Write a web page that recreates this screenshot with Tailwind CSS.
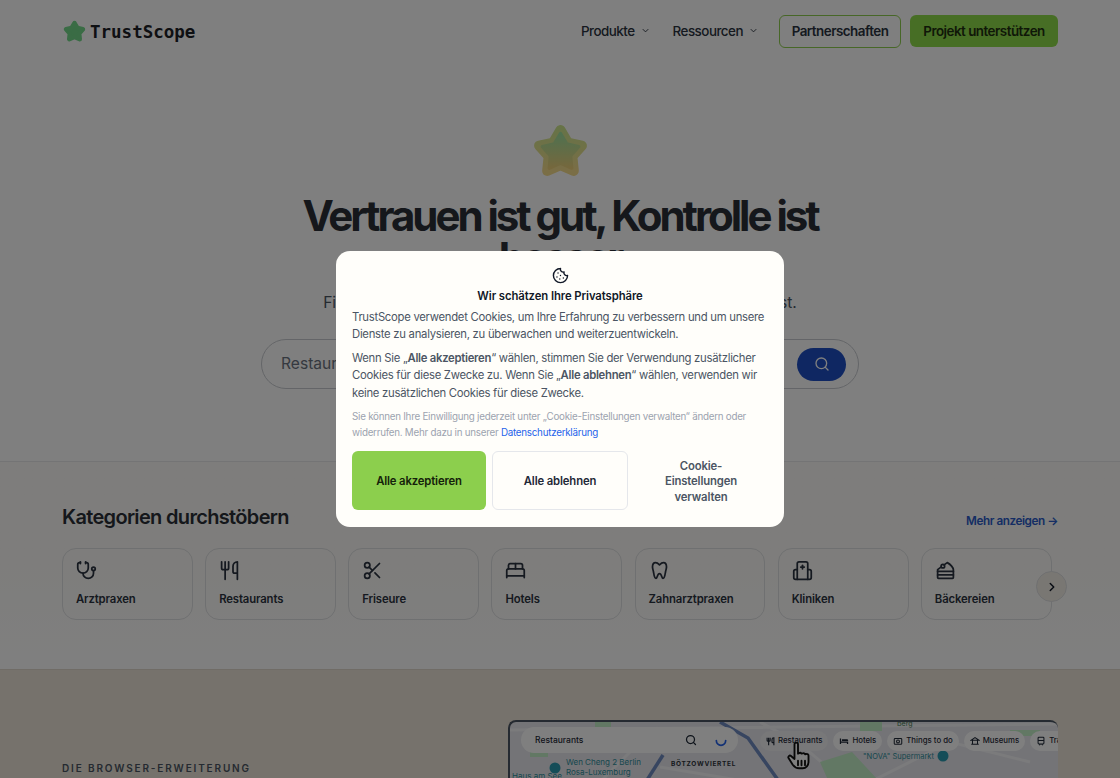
<!doctype html>
<html lang="de"><head><meta charset="utf-8"><script src="https://cdn.jsdelivr.net/npm/@tailwindcss/browser@4"></script><title>TrustScope</title></head>
<body class="font-['Inter','Noto_Sans',sans-serif] bg-white text-[#111827]">
<div class="relative h-[778px] w-[1120px] overflow-hidden">
  <header class="flex h-[62px] items-center justify-between px-[62px]">
    <div class="flex items-center gap-[3px]">
      <svg class="w-[25px] h-[25px]" viewBox="0 0 56 56"><path d="M28 9l6.500 11.100 12.500 2.700-8.500 9.600 1.300 12.800-11.800-5.200-11.800 5.200 1.300-12.800-8.500-9.600 12.500-2.700z" fill="#74d98a" stroke="#74d98a" stroke-width="10" stroke-linejoin="round"/></svg>
      <span class="mt-[2px] font-['DejaVu_Sans_Mono',monospace] text-[17.5px] font-bold text-[#1c2026]">TrustScope</span>
    </div>
    <nav class="flex items-center text-[13.4px] font-medium tracking-[-0.038em] text-[#2b3340]">
      <span class="flex items-center gap-[5px]">Produkte <svg class="w-[11px] h-[11px]" viewBox="0 0 24 24" fill="none" stroke="currentColor" stroke-width="2"><path d="m6 9 6 6 6-6"/></svg></span>
      <span class="ml-[22px] flex items-center gap-[5px]">Ressourcen <svg class="w-[11px] h-[11px]" viewBox="0 0 24 24" fill="none" stroke="currentColor" stroke-width="2"><path d="m6 9 6 6 6-6"/></svg></span>
      <a class="ml-[20px] flex h-[33px] w-[122px] items-center justify-center rounded-[6px] border border-[#8fce4e] font-semibold">Partnerschaften</a>
      <a class="ml-[9px] flex h-[32px] w-[148px] items-center justify-center rounded-[6px] bg-[#8fdc4a] font-semibold text-[#1f3010]">Projekt unterstützen</a>
    </nav>
  </header>

  <section class="h-[400px] border-b border-[#e8e9ea] pt-[58px] text-center">
    <svg class="mx-auto w-[63px] h-[63px]" viewBox="0 0 56 56">
      <defs>
        <linearGradient id="a" x1="0" y1="0" x2="0" y2="1"><stop offset="0" stop-color="#cfe68f"/><stop offset="1" stop-color="#f5dc8c"/></linearGradient>
        <linearGradient id="b" x1="0" y1="0" x2="0" y2="1"><stop offset="0" stop-color="#9fe2a0"/><stop offset="1" stop-color="#ecd07a"/></linearGradient>
      </defs>
      <path d="M28 9l6.500 11.100 12.500 2.700-8.500 9.600 1.300 12.800-11.800-5.200-11.800 5.200 1.300-12.800-8.500-9.600 12.500-2.700z" fill="url(#a)" stroke="url(#a)" stroke-width="9" stroke-linejoin="round"/>
      <path d="M28 12l5.600 9.300 10.600 2.400-7.200 8.200 1 10.900-10-4.300-10 4.300 1-10.900-7.200-8.200 10.600-2.400z" fill="url(#b)" stroke="url(#b)" stroke-width="3" stroke-linejoin="round"/>
    </svg>
    <h1 class="mx-auto mt-[12px] w-[600px] text-[42px] font-bold leading-[42px] tracking-[-0.072em] text-[#2a2f36]">Vertrauen ist gut, Kontrolle ist besser</h1>
    <p class="mt-[12px] whitespace-nowrap text-[15.6px] leading-[24px] text-[#4b5563]">Finden Sie heraus, was an Online-Bewertungen wirklich echt ist.</p>
    <div class="mx-auto mt-[24px] flex h-[50px] w-[598px] items-center justify-between rounded-full border border-[#c8cbd0] pl-[19px] pr-[12px]">
      <span class="text-[15.6px] text-[#6b7280]">Restaurants, Hotels, Ärzte und mehr</span>
      <span class="flex h-[33px] w-[49px] items-center justify-center rounded-full bg-[#1e4fc4]"><svg class="w-[16px] h-[16px]" viewBox="0 0 24 24" fill="none" stroke="#fff" stroke-width="2" stroke-linecap="round"><circle cx="11" cy="11" r="8"/><path d="m21 21-4.300-4.300"/></svg></span>
    </div>
  </section>

  <section class="relative h-[207px] bg-linear-to-b from-[#fcfbf8] via-[#fcfbf8] to-white px-[62px] pt-[41px]">
    <div class="flex items-end justify-between">
      <h2 class="text-[20px] font-semibold leading-[28px] tracking-[-0.67px] text-[#2a2f36]">Kategorien durchstöbern</h2>
      <a class="pb-[1px] text-[11.75px] font-semibold leading-[18px] tracking-[-0.038em] text-[#2a5bc8]">Mehr anzeigen →</a>
    </div>
    <div class="mt-[17px] flex gap-[12.25px] text-[11.3px] font-semibold tracking-[-0.12px] text-[#2b3340]">
      <div class="h-[72px] w-[130.9px] rounded-[14px] border border-[#dfe0e2] px-[13px] pt-[11px]"><svg class="w-[21px] h-[21px]" viewBox="0 0 24 24" fill="none" stroke="currentColor" stroke-width="2" stroke-linecap="round" stroke-linejoin="round"><path d="M11 2v2"/><path d="M5 2v2"/><path d="M5 3H4a2 2 0 0 0-2 2v4a6 6 0 0 0 12 0V5a2 2 0 0 0-2-2h-1"/><path d="M8 15a6 6 0 0 0 12 0v-3"/><circle cx="20" cy="10" r="2"/></svg><p class="mt-[10px]">Arztpraxen</p></div>
      <div class="h-[72px] w-[130.9px] rounded-[14px] border border-[#dfe0e2] px-[13px] pt-[11px]"><svg class="w-[21px] h-[21px]" viewBox="0 0 24 24" fill="none" stroke="currentColor" stroke-width="2" stroke-linecap="round" stroke-linejoin="round"><path d="M3 2v7c0 1.100.9 2 2 2h4a2 2 0 0 0 2-2V2"/><path d="M7 2v20"/><path d="M21 15V2a5 5 0 0 0-5 5v6c0 1.100.9 2 2 2h3Zm0 0v7"/></svg><p class="mt-[10px]">Restaurants</p></div>
      <div class="h-[72px] w-[130.9px] rounded-[14px] border border-[#dfe0e2] px-[13px] pt-[11px]"><svg class="w-[21px] h-[21px]" viewBox="0 0 24 24" fill="none" stroke="currentColor" stroke-width="2" stroke-linecap="round" stroke-linejoin="round"><circle cx="6" cy="6" r="3"/><path d="M8.120 8.120 12 12"/><path d="M20 4 8.120 15.880"/><circle cx="6" cy="18" r="3"/><path d="M14.800 14.800 20 20"/></svg><p class="mt-[10px]">Friseure</p></div>
      <div class="h-[72px] w-[130.9px] rounded-[14px] border border-[#dfe0e2] px-[13px] pt-[11px]"><svg class="w-[21px] h-[21px]" viewBox="0 0 24 24" fill="none" stroke="currentColor" stroke-width="2" stroke-linecap="round" stroke-linejoin="round"><path d="M2 20v-8a2 2 0 0 1 2-2h16a2 2 0 0 1 2 2v8"/><path d="M4 10V6a2 2 0 0 1 2-2h12a2 2 0 0 1 2 2v4"/><path d="M12 4v6"/><path d="M2 18h20"/></svg><p class="mt-[10px]">Hotels</p></div>
      <div class="h-[72px] w-[130.9px] rounded-[14px] border border-[#dfe0e2] px-[13px] pt-[11px]"><svg class="w-[21px] h-[21px]" viewBox="0 0 24 24" fill="none" stroke="currentColor" stroke-width="2" stroke-linecap="round" stroke-linejoin="round"><path d="M12 5.500C10.500 4 9.500 3 7.500 3 5 3 4 5 4 8c0 2 .8 3.500 1.200 6 .4 2.500 1 7 2.800 7 1.500 0 1.500-5.500 4-5.500s2.500 5.500 4 5.500c1.800 0 2.400-4.500 2.800-7 .4-2.500 1.200-4 1.200-6 0-3-1-5-3.500-5-2 0-3 1-4.500 2.500z"/></svg><p class="mt-[10px]">Zahnarztpraxen</p></div>
      <div class="h-[72px] w-[130.9px] rounded-[14px] border border-[#dfe0e2] px-[13px] pt-[11px]"><svg class="w-[21px] h-[21px]" viewBox="0 0 24 24" fill="none" stroke="currentColor" stroke-width="2" stroke-linecap="round" stroke-linejoin="round"><path d="M6 22V4a2 2 0 0 1 2-2h8a2 2 0 0 1 2 2v18z"/><path d="M12 6v4"/><path d="M10 8h4"/><path d="M6 11H4a2 2 0 0 0-2 2v7a2 2 0 0 0 2 2h2"/><path d="M18 11h2a2 2 0 0 1 2 2v7a2 2 0 0 1-2 2h-2"/></svg><p class="mt-[10px]">Kliniken</p></div>
      <div class="h-[72px] w-[130.9px] rounded-[14px] border border-[#dfe0e2] px-[13px] pt-[11px]"><svg class="w-[21px] h-[21px]" viewBox="0 0 24 24" fill="none" stroke="currentColor" stroke-width="2" stroke-linecap="round" stroke-linejoin="round"><circle cx="9" cy="7" r="2"/><path d="M7.200 7.900 3 11v9c0 .6.4 1 1 1h16c.6 0 1-.4 1-1v-9c0-2-3-6-7-8l-3.600 2.600"/><path d="M21 13H3"/><path d="M21 17H3"/></svg><p class="mt-[10px]">Bäckereien</p></div>
    </div>
    <span class="absolute left-[1036px] top-[109px] flex h-[31px] w-[31px] items-center justify-center rounded-full border border-[#dfe0e2] bg-[#f3efe6]"><svg class="w-[14px] h-[14px]" viewBox="0 0 24 24" fill="none" stroke="#111827" stroke-width="2.500" stroke-linecap="round" stroke-linejoin="round"><path d="m9 18 6-6-6-6"/></svg></span>
  </section>

  <section class="flex h-[200px] border-t border-[#e0d9cc] bg-[#ece5d8] px-[62px] pt-[50px]">
    <div class="w-[446px] pt-[42px] text-[10px] font-semibold uppercase leading-[12px] tracking-[1.85px] text-[#4b5563]">Die Browser-Erweiterung</div>
    <div class="relative h-[120px] w-[550px] overflow-hidden rounded-t-[8px] border-l-[2px] border-t-[2px] border-[#4b5563] bg-[#e8e8ee]">
      <svg class="absolute inset-0" width="548" height="58" viewBox="0 0 548 58">
        <path d="M60 18 L120 30 L90 60 M250 0 L290 22 L335 60 M0 8 L548 2 M360 60 L440 20 L520 40 M150 45 L240 60" stroke="#f6f6f9" stroke-width="3" fill="none"/>
        <path d="M85 0 h16 v5 h-16z M20 27 h18 v8 h-18z M310 40 l32 -10 l26 28 h-50z M350 0 h22 v9 h-22z M500 8 h30 v6 h-30z" fill="#c4f0c8"/>
        <path d="M210 0 L238 16 L268 58" stroke="#6f8ac0" stroke-width="3.500" fill="none"/>
        <path d="M153 33 L137 58" stroke="#6f8ac0" stroke-width="3.500" fill="none"/>
        <text x="161" y="44" font-size="6.500" font-weight="700" letter-spacing="0.7" fill="#2f343b">BÖTZOWVIERTEL</text>
        <circle cx="45" cy="46" r="5.500" fill="#2a9ab0"/>
        <text x="56" y="43" font-size="8" fill="#2f8f9c">Wen Cheng 2 Berlin</text>
        <text x="56" y="53" font-size="8" fill="#2f8f9c">Rosa-Luxemburg</text>
        <text x="2" y="57" font-size="8" fill="#2f8f9c">Haus am See</text>
        <text x="353" y="37" font-size="7.500" fill="#2f8f9c">"NOVA" Supermarkt</text>
        <circle cx="433" cy="34" r="5.500" fill="#2a9ab0"/>
        <text x="387" y="4" font-size="7" fill="#4a7f55">Berg</text>
      </svg>
      <div class="absolute left-[11px] top-[5px] flex h-[26px] w-[217px] items-center justify-between rounded-full bg-white pl-[14px] pr-[10px] text-[8.500px] font-medium text-[#1f2937]">
        <span>Restaurants</span>
        <span class="flex items-center gap-[17px]">
          <svg class="w-[12px] h-[12px]" viewBox="0 0 24 24" fill="none" stroke="#1f2937" stroke-width="2.500" stroke-linecap="round"><circle cx="11" cy="11" r="8"/><path d="m21 21-4.300-4.300"/></svg>
          <svg class="w-[14px] h-[14px]" viewBox="0 0 24 24" fill="none" stroke="#2563eb" stroke-width="3" stroke-linecap="round"><path d="M4 13a8 8 0 0 0 16 0"/></svg>
        </span>
      </div>
      <div class="absolute left-[250px] top-[9px] flex h-[20px] items-center gap-[5px] whitespace-nowrap text-[7.800px] font-medium text-[#1f2937]">
        <span class="flex h-[20px] items-center gap-[3px] rounded-full bg-[#f0f0f3] px-[6px]"><svg class="w-[9px] h-[9px]" viewBox="0 0 24 24" fill="none" stroke="currentColor" stroke-width="3"><path d="M3 2v7c0 1.100.9 2 2 2h4a2 2 0 0 0 2-2V2M7 2v20M21 15V2a5 5 0 0 0-5 5v6c0 1.100.9 2 2 2h3Zm0 0v7"/></svg>Restaurants</span>
        <span class="flex h-[20px] items-center gap-[3px] rounded-full bg-white px-[6px]"><svg class="w-[10px] h-[10px]" viewBox="0 0 24 24" fill="currentColor"><path d="M2 6h3v7h17v6h-3v-3H5v3H2zM7 8h12a3 3 0 0 1 3 3v1H7z"/></svg>Hotels</span>
        <span class="flex h-[20px] items-center gap-[3px] rounded-full bg-white px-[6px]"><svg class="w-[10px] h-[10px]" viewBox="0 0 24 24" fill="none" stroke="currentColor" stroke-width="2.500"><rect x="3" y="6" width="18" height="14" rx="2"/><circle cx="12" cy="13" r="3.500"/></svg>Things to do</span>
        <span class="flex h-[20px] items-center gap-[3px] rounded-full bg-white px-[6px]"><svg class="w-[10px] h-[10px]" viewBox="0 0 24 24" fill="none" stroke="currentColor" stroke-width="2.500"><path d="M3 10 12 4l9 6zM6 10v9M18 10v9M3 20h18"/></svg>Museums</span>
        <span class="flex h-[20px] items-center gap-[3px] rounded-l-full bg-white pl-[6px] pr-[20px]"><svg class="w-[10px] h-[10px]" viewBox="0 0 24 24" fill="none" stroke="currentColor" stroke-width="2.500"><rect x="5" y="3" width="14" height="16" rx="2"/><path d="M5 11h14M8 22l2-3M16 22l-2-3"/></svg>Tra</span>
      </div>
      <svg class="absolute left-[274px] top-[19px] w-[28px] h-[30px]" viewBox="0 0 24 24" fill="#fff" stroke="#111" stroke-width="1.600" stroke-linejoin="round" stroke-linecap="round"><path d="M9 2a1.500 1.500 0 0 1 3 0v8l1-.5a1.500 1.500 0 0 1 2 .5l1-.3a1.500 1.500 0 0 1 2 .8l1-.2a1.500 1.500 0 0 1 2 1.500V17c0 3-2 5.500-5 5.500h-3c-2.500 0-4-1-5.500-3L4 14c-1-1.500.8-3 2-2l3 2.500z"/><path d="M12 16v4M15 16v4M18 16v4"/></svg>
    </div>
  </section>

  <div class="absolute inset-0 flex items-center justify-center bg-black/50">
    <div class="w-[448px] rounded-[14px] bg-[#fffefa] px-[16px] pb-[17px] pt-[16px] text-[11.3px] leading-[17.5px] tracking-[-0.27px] text-[#4b5563]">
      <svg class="mx-auto w-[17px] h-[17px]" viewBox="0 0 24 24" fill="none" stroke="#111827" stroke-width="2" stroke-linecap="round" stroke-linejoin="round"><path d="M12 2a10 10 0 1 0 10 10 4 4 0 0 1-5-5 4 4 0 0 1-5-5"/><path d="M8.500 8.500v.01"/><path d="M16 15.500v.01"/><path d="M12 12v.01"/><path d="M11 17v.01"/><path d="M7 14v.01"/></svg>
      <h2 class="mt-[4px] text-center font-semibold tracking-[-0.08px] text-[#111827]">Wir schätzen Ihre Privatsphäre</h2>
      <p class="mt-[3px]">TrustScope verwendet Cookies, um Ihre Erfahrung zu verbessern und um unsere Dienste zu analysieren, zu überwachen und weiterzuentwickeln.</p>
      <p class="mt-[6px]">Wenn Sie „<b class="font-semibold">Alle akzeptieren</b>“ wählen, stimmen Sie der Verwendung zusätzlicher Cookies für diese Zwecke zu. Wenn Sie „<b class="font-semibold">Alle ablehnen</b>“ wählen, verwenden wir keine zusätzlichen Cookies für diese Zwecke.</p>
      <p class="mt-[7px] text-[9.8px] leading-[15.75px] tracking-[-0.25px] text-[#9ca3af]">Sie können Ihre Einwilligung jederzeit unter „Cookie-Einstellungen verwalten“ ändern oder widerrufen. Mehr dazu in unserer <a class="text-[#2563eb]">Datenschutzerklärung</a></p>
      <div class="mt-[10px] flex gap-[6px] font-semibold tracking-[-0.14px]">
        <button class="h-[59px] w-[134px] rounded-[6px] bg-[#8ccf4d] pt-[2px] text-[#14210a]">Alle akzeptieren</button>
        <button class="h-[59px] w-[136px] rounded-[6px] border border-[#e5e7eb] pt-[2px] text-[#1f2937]">Alle ablehnen</button>
        <button class="h-[59px] w-[134px] px-[24px] pt-[3px] leading-[15.5px] text-[#4b5563]">Cookie-Einstellungen verwalten</button>
      </div>
    </div>
  </div>
</div>
</body></html>
